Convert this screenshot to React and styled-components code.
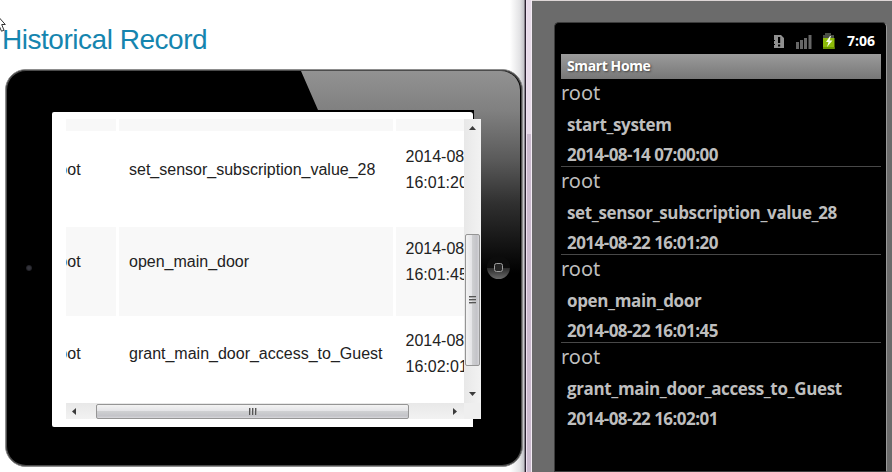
import React from 'react';
import styled, { createGlobalStyle } from 'styled-components';

const GlobalStyle = createGlobalStyle`
  * { box-sizing: border-box; }
  body { margin: 0; background: #fff; overflow: hidden; }
`;

const Page = styled.main`
  display: flex;
  width: 892px;
  height: 472px;
  overflow: hidden;
  font-family: 'Liberation Sans', Arial, sans-serif;
`;

const WebPane = styled.section`
  position: relative;
  flex: 0 0 524px;
  padding: 23px 0 0 2px;
  background: linear-gradient(90deg, #fff 510px, #e2e2e4 520px, #c3c3c8 524px);
`;

const Cursor = styled.svg`
  position: absolute;
  left: 0;
  top: 16px;
`;

const Heading = styled.h1`
  margin: 0;
  height: 46px;
  font-size: 28px;
  line-height: 33px;
  font-weight: 400;
  letter-spacing: -0.47px;
  color: #1585af;
  white-space: nowrap;
`;

const Tablet = styled.div`
  display: flex;
  align-items: flex-start;
  position: relative;
  width: 518px;
  height: 398px;
  margin-left: 3px;
  padding: 41px 0 0 46px;
  border: 1px solid #8d8d8d;
  border-radius: 21px;
  background: #000;
  box-shadow: inset 0 0 0 1px #4c4c4c;
`;

const Glare = styled.div`
  position: absolute;
  top: 1px;
  right: 2px;
  left: 295px;
  height: 205px;
  border-radius: 0 19px 0 0;
  background: linear-gradient(#929292 0, #808080 40px, #595959 90px, #303030 132px, #161616 170px, #000 202px);
  clip-path: polygon(0 0, 100% 0, 100% 100%, 173px 100%, 173px 39px, 17px 39px);
`;

const Camera = styled.i`
  position: absolute;
  left: 20px;
  top: 195px;
  width: 6px;
  height: 6px;
  border-radius: 50%;
  background: radial-gradient(#34343c 30%, #17171b 80%);
`;

const HomeButton = styled.svg`
  position: absolute;
  left: 480px;
  top: 185px;
`;

const Screen = styled.div`
  position: relative;
  width: 421px;
  height: 315px;
  margin-top: 1px;
  padding: 7px 0 0 14px;
  background: #fff;
  border-radius: 2px 3px 0 2px;
  box-shadow: 0 -2px 0 #000, 1px 0 0 #000;
`;

const ScrollFrame = styled.div`
  display: grid;
  grid-template: 284px 16px / 398px 17px;
  width: 415px;
  height: 300px;
  background: #efefef;
`;

const Viewport = styled.div`
  overflow: hidden;
  background: #fff;
`;

const Grid = styled.div`
  display: grid;
  grid-template-columns: 50px 274px 120px;
  column-gap: 3px;
  row-gap: 3px;
  grid-template-rows: 12px 90px 89px 89px;
`;

const Cell = styled.div`
  display: flex;
  align-items: center;
  padding: ${p => (p.$tail ? 0 : '9px 0 28px 10px')};
  background: ${p => (p.$shaded ? '#f8f8f8' : '#fff')};
  font-size: 16px;
  line-height: 26px;
  color: #222;
  white-space: nowrap;
  overflow: hidden;
`;

const UserText = styled.span`
  margin-left: -23px;
`;

const DateText = styled.span`
  margin-left: -0.5px;
`;

const VBar = styled.div`
  display: flex;
  flex-direction: column;
  align-items: center;
  grid-row: 1;
  grid-column: 2;
  padding: 6px 0 5px;
  background: linear-gradient(90deg, #e8e8e8, #f2f2f2);
`;

const HBar = styled.div`
  display: flex;
  align-items: center;
  justify-content: space-between;
  padding: 0 5px 0 5px;
  background: linear-gradient(#e8e8e8, #f2f2f2);
`;

const Thumb = styled.div`
  display: flex;
  flex-direction: ${p => (p.$vertical ? 'column' : 'row')};
  align-items: center;
  justify-content: center;
  gap: 1px;
  flex: none;
  width: ${p => (p.$vertical ? '15px' : '313px')};
  height: ${p => (p.$vertical ? '132px' : '15px')};
  margin: ${p => (p.$vertical ? '102px 0 auto' : '0 25px 0 0')};
  border: 1px solid #959595;
  border-radius: 2px;
  background: linear-gradient(${p => (p.$vertical ? '90deg' : '180deg')}, #f3f3f3, #e4e4e7 45%, #cecfd1 50%, #c3c3c8 85%, #d9d9dc);
`;

const Grip = styled.i`
  width: ${p => (p.$vertical ? '7px' : '2px')};
  height: ${p => (p.$vertical ? '2px' : '7px')};
  background: linear-gradient(${p => (p.$vertical ? '180deg' : '90deg')}, #555 50%, #aaa 50%);
`;

const Divider = styled.div`
  flex: 0 0 8px;
  background:
    linear-gradient(90deg, #88848c 0, #88848c 1px, #29212f 1px, #29212f 2px, #eee0f0 2px, #eee0f0 3px, transparent 3px, transparent 7px, #f4edf5 7px),
    linear-gradient(#e6dae8 134px, #cabace 134px);
`;

const Emulator = styled.section`
  flex: 1;
  padding: 21px 5px 0 22px;
  background: #6b6b6b;
  border-top: 1px solid #ddd6d6;
  font-family: 'Noto Sans', 'Open Sans', sans-serif;
`;

const Phone = styled.div`
  width: 333px;
  height: 450px;
  padding: 5px 6px 0;
  background: #000;
  border: 1px solid #3c3c3c;
  border-right-color: #999;
  border-radius: 5px 5px 0 0;
`;

const StatusBar = styled.header`
  display: flex;
  align-items: center;
  justify-content: flex-end;
  height: 26px;
  padding-right: 5px;
  font: 700 14px/26px 'Open Sans', sans-serif;
  color: #fff;
`;

const Indicators = styled.svg`
  margin-right: 12px;
`;

const TitleBar = styled.h2`
  margin: 0;
  width: 320px;
  height: 25px;
  padding-left: 6px;
  background: linear-gradient(#9b9b9b, #777);
  font: 700 14px/24px 'Open Sans', sans-serif;
  letter-spacing: -0.4px;
  color: #fff;
  text-shadow: 1px 1px 2px #444;
`;

const LogItem = styled.article`
  width: 320px;
  height: 88px;
  border-bottom: 1px solid ${p => (p.$last ? 'transparent' : '#484848')};
  color: #bebebe;
`;

const LogUser = styled.div`
  height: 31px;
  font-size: 20px;
  line-height: 28px;
`;

const LogLine = styled.div`
  height: 30px;
  padding-left: 6px;
  font: 700 17px/30px 'Open Sans', sans-serif;
  letter-spacing: ${p => p.$spacing};
  white-space: nowrap;
`;

const rows = [
  { event: 'set_sensor_subscription_value_28', time: '16:01:20' },
  { event: 'open_main_door', time: '16:01:45', shaded: true },
  { event: 'grant_main_door_access_to_Guest', time: '16:02:01' },
];

const logs = [
  ['start_system', '2014-08-14 07:00:00'],
  ['set_sensor_subscription_value_28', '2014-08-22 16:01:20'],
  ['open_main_door', '2014-08-22 16:01:45'],
  ['grant_main_door_access_to_Guest', '2014-08-22 16:02:01'],
];

const arrows = {
  up: 'M0 5 L3.5 1 L7 5Z',
  down: 'M0 1 L3.5 5 L7 1Z',
  left: 'M5 0 L1 3.5 L5 7Z',
  right: 'M1 0 L5 3.5 L1 7Z',
};

const Arrow = ({ dir }) => (
  <svg width="7" height="7" viewBox="0 0 7 7"><path d={arrows[dir]} fill="#3b3b3b" /></svg>
);

const Grips = ({ vertical }) => [0, 1, 2].map(i => <Grip key={i} $vertical={vertical} />);

function StatusIcons() {
  return (
    <Indicators width="62" height="18" viewBox="0 0 62 18">
      <path d="M1 3H8L11 6V16H1V13H2V12H1V9H2V8H1Z" fill="#909090" />
      <path d="M5 5H7.2V11H5ZM5 12.5H7.2V14.5H5Z" fill="#000" />
      <path d="M23 10h3v7h-3zM27 8h3v9h-3zM31 6h3v11h-3zM35.5 3h3v14h-3z" fill="#676767" />
      <path d="M52 3V1H58V3H61V7H50V3Z" fill="#4a4f45" />
      <path d="M50 6H61.5V17H50Z" fill="#8dbb08" />
      <path d="M50 15H61.5V17H50Z" fill="#6c9500" />
      <path d="M57 4L53 10H55.5L54 15L59.5 8.5H56.5L58 4Z" fill="#f6ffe6" />
    </Indicators>
  );
}

function HistoryTable() {
  return (
    <Grid>
      <Cell $shaded $tail /><Cell $shaded $tail /><Cell $shaded $tail />
      {rows.map(r => (
        <React.Fragment key={r.event}>
          <Cell $shaded={r.shaded}><UserText>root</UserText></Cell>
          <Cell $shaded={r.shaded}>{r.event}</Cell>
          <Cell $shaded={r.shaded}><DateText>2014-08-22<br />{r.time}</DateText></Cell>
        </React.Fragment>
      ))}
    </Grid>
  );
}

export default function App() {
  return (
    <Page>
      <GlobalStyle />
      <WebPane>
        <Heading>Historical Record</Heading>
        <Tablet>
          <Glare />
          <Camera />
          <HomeButton width="25" height="25" viewBox="0 0 25 25">
            <defs>
              <linearGradient id="home" x2="0" y2="1">
                <stop offset="0.5" stopColor="#0c0c0c" />
                <stop offset="0.51" stopColor="#292929" />
                <stop offset="1" stopColor="#6a6a6a" />
              </linearGradient>
            </defs>
            <circle cx="12.5" cy="12.5" r="11.5" fill="url(#home)" />
            <rect x="8.5" y="8.5" width="8" height="8" rx="2" fill="#252525" stroke="#a0a0a0" />
          </HomeButton>
          <Screen>
            <ScrollFrame>
              <Viewport><HistoryTable /></Viewport>
              <VBar>
                <Arrow dir="up" />
                <Thumb $vertical><Grips vertical /></Thumb>
                <Arrow dir="down" />
              </VBar>
              <HBar>
                <Arrow dir="left" />
                <Thumb><Grips /></Thumb>
                <Arrow dir="right" />
              </HBar>
            </ScrollFrame>
          </Screen>
        </Tablet>
        <Cursor width="8" height="18" viewBox="0 0 8 18">
          <path d="M-5 -3L5.3 8.5H1.7L4 14.2L1.5 15.2L-1 9.5" fill="#fff" stroke="#333" />
        </Cursor>
      </WebPane>
      <Divider />
      <Emulator>
        <Phone>
          <StatusBar><StatusIcons />7:06</StatusBar>
          <TitleBar>Smart Home</TitleBar>
          {logs.map(([event, time], i) => (
            <LogItem key={event} $last={i === logs.length - 1}>
              <LogUser>root</LogUser>
              <LogLine $spacing="-0.36px">{event}</LogLine>
              <LogLine $spacing="-0.54px">{time}</LogLine>
            </LogItem>
          ))}
        </Phone>
      </Emulator>
    </Page>
  );
}
